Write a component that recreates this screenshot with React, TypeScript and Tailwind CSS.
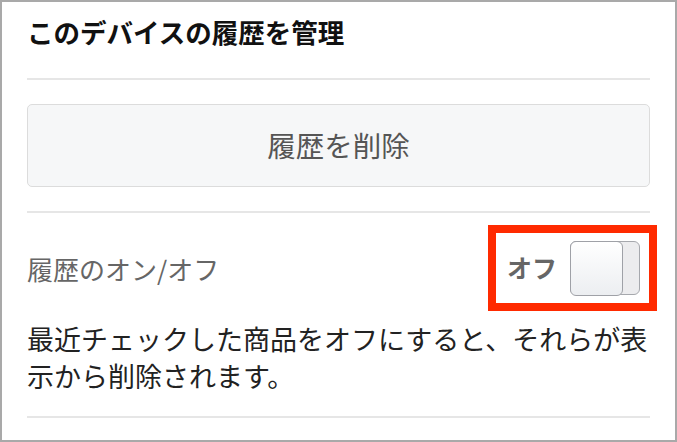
import React, { useState } from 'react';

const font = { fontFamily: '"Noto Sans CJK JP", "Noto Sans", sans-serif' };

const Toggle: React.FC<{ on: boolean; onChange: () => void }> = ({ on, onChange }) => (
  <button
    type="button"
    onClick={onChange}
    className="relative w-[70px] h-[54px] rounded-[6px] border-[1.5px] border-[#a6a8ad] bg-[#ececee]"
  >
    <span
      className={
        'absolute top-[-1.5px] bottom-[-1.5px] w-[53px] rounded-[6px] border-[1.5px] border-[#9fa1a7] bg-gradient-to-b from-white to-[#eceef1] ' +
        (on ? 'right-[-1.5px]' : 'left-[-1.5px]')
      }
    />
  </button>
);

export default function App() {
  const [on, setOn] = useState(false);

  return (
    <div className="w-full h-[442px] bg-white border-2 border-[#a9a9a9] px-[25px]" style={font}>
      <div className="pt-[14px] pb-[30px] border-b-2 border-[#e6e6e6]">
        <h1 className="text-[26.5px] leading-[32px] font-bold text-[#111]">このデバイスの履歴を管理</h1>
      </div>

      <div className="py-[24px] border-b-2 border-[#e6e6e6]">
        <button
          type="button"
          className="w-full h-[83px] rounded-[5px] border-[1.5px] border-[#dcdcdc] bg-[#f6f7f8] text-[28.5px] text-[#555]"
        >
          履歴を削除
        </button>
      </div>

      <div className="border-b-2 border-[#e6e6e6] pb-[22px]">
        <div className="flex items-center justify-between pt-[12px]">
          <span className="text-[26px] text-[#666]">履歴のオン/オフ</span>
          <div className="flex items-center h-[86px] w-[169px] -mr-[7px] border-[8px] border-[#ff2a00] pl-[11px] gap-[13px]">
            <span className="text-[25px] font-bold text-[#666]">{on ? 'オン' : 'オフ'}</span>
            <Toggle on={on} onChange={() => setOn(!on)} />
          </div>
        </div>
        <p className="mt-[9px] text-[27px] leading-[37px] text-[#222]">
          最近チェックした商品をオフにすると、それらが表示から削除されます。
        </p>
      </div>
    </div>
  );
}
